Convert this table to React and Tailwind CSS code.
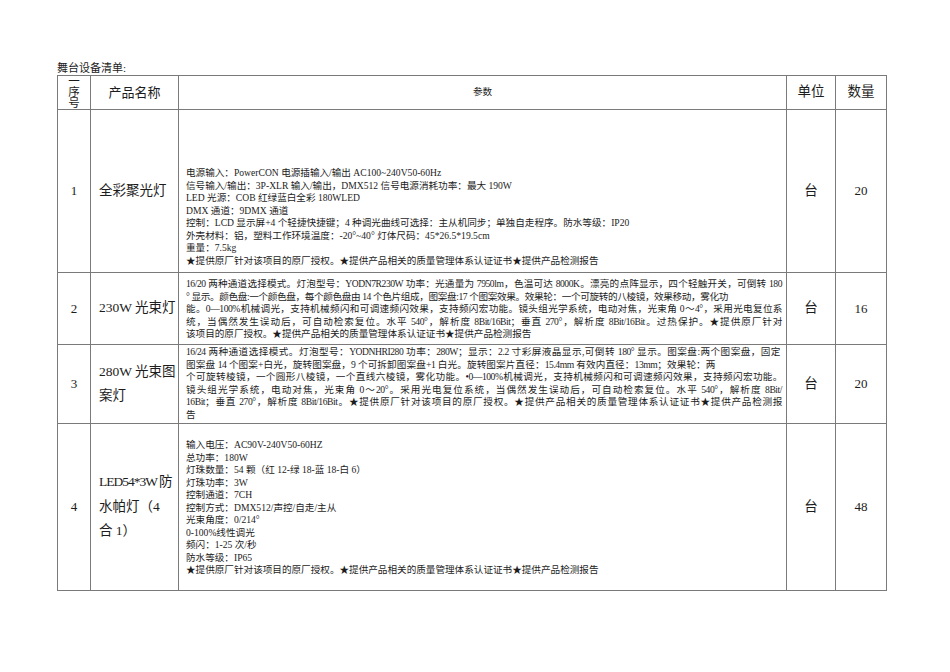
import React from 'react';

const FONT = { fontFamily: '"Liberation Serif", "Noto Sans CJK SC", serif' };

const rows = [
    {
        no: '1',
        name: ['全彩聚光灯'],
        h: 163,
        pt: 57,
        lines: [
            { t: '电源输入：PowerCON 电源插输入/输出 AC100~240V50-60Hz' },
            { t: '信号输入/输出：3P-XLR 输入/输出，DMX512 信号电源消耗功率：最大 190W' },
            { t: 'LED 光源：COB 红绿蓝白全彩 180WLED' },
            { t: 'DMX 通道：9DMX 通道' },
            { t: '控制：LCD 显示屏+4 个轻捷快捷键；4 种调光曲线可选择：主从机同步；单独自走程序。防水等级：IP20' },
            { t: '外壳材料：铝，塑料工作环境温度：-20°~40° 灯体尺码：45*26.5*19.5cm' },
            { t: '重量：7.5kg' },
            { t: '★提供原厂针对该项目的原厂授权。★提供产品相关的质量管理体系认证证书★提供产品检测报告' }
        ],
        unit: '台',
        qty: '20'
    },
    {
        no: '2',
        name: ['230W 光束灯'],
        h: 72,
        pt: 5,
        lines: [
            { t: '16/20 两种通道选择模式。灯泡型号：YODN7R230W 功率：光通量为 7950lm，色温可达 8000K。漂亮的点阵显示，四个轻触开关，可倒转 180', w: 596 },
            { t: '° 显示。颜色盘:一个颜色盘，每个颜色盘由 14 个色片组成，图案盘:17 个图案效果。效果轮：一个可旋转的八棱镜，效果移动，雾化功', w: 542 },
            { t: '能。0—100%机械调光，支持机械频闪和可调速频闪效果，支持频闪宏功能。镜头组光学系统，电动对焦，光束角 0～4°，采用光电复位系', w: 596 },
            { t: '统，当偶然发生误动后，可自动检索复位。水平 540°，解析度 8Bit/16Bit；垂直 270°，解析度 8Bit/16Bit。过热保护。★提供原厂针对', w: 596 },
            { t: '该项目的原厂授权。★提供产品相关的质量管理体系认证证书★提供产品检测报告' }
        ],
        unit: '台',
        qty: '16'
    },
    {
        no: '3',
        name: ['280W 光束图', '案灯'],
        h: 79,
        pt: 1,
        lines: [
            { t: '16/24 两种通道选择模式。灯泡型号：YODNHRI280 功率：280W；显示：2.2 寸彩屏液晶显示,可倒转 180° 显示。图案盘:两个图案盘，固定', w: 594 },
            { t: '图案盘 14 个图案+白光，旋转图案盘，9 个可拆卸图案盘+1 白光。旋转图案片直径：15.4mm 有效内直径：13mm；效果轮：两', w: 529 },
            { t: '个可旋转棱镜，一个圆形八棱镜，一个直线六棱镜，雾化功能。•0—100%机械调光，支持机械频闪和可调速频闪效果，支持频闪宏功能。', w: 596 },
            { t: '镜头组光学系统，电动对焦，光束角 0～20°。采用光电复位系统，当偶然发生误动后，可自动检索复位。水平 540°，解析度 8Bit/', w: 596 },
            { t: '16Bit；垂直 270°，解析度 8Bit/16Bit。★提供原厂针对该项目的原厂授权。★提供产品相关的质量管理体系认证证书★提供产品检测报', w: 596 },
            { t: '告' }
        ],
        unit: '台',
        qty: '20'
    },
    {
        no: '4',
        name: ['LED54*3W 防', '水帕灯（4', '合 1）'],
        tight: true,
        h: 167,
        pt: 15,
        lines: [
            { t: '输入电压：AC90V-240V50-60HZ' },
            { t: '总功率：180W' },
            { t: '灯珠数量：54 颗（红 12-绿 18-蓝 18-白 6）' },
            { t: '灯珠功率：3W' },
            { t: '控制通道：7CH' },
            { t: '控制方式：DMX512/声控/自走/主从' },
            { t: '光束角度：0/214°' },
            { t: '0-100%线性调光' },
            { t: '频闪：1-25 次/秒' },
            { t: '防水等级：IP65' },
            { t: '★提供原厂针对该项目的原厂授权。★提供产品相关的质量管理体系认证证书★提供产品检测报告' }
        ],
        unit: '台',
        qty: '48'
    }
];

function ParamLine({ line }) {
    if (line.w) {
        // full lines: squeezed a little, then stretched back out by justify
        return (
            <div
                className="h-[12.5px] text-justify [text-align-last:justify] tracking-[-0.45px]"
                style={{ width: line.w }}
            >
                {line.t}
            </div>
        );
    }
    return <div className="whitespace-nowrap">{line.t}</div>;
}

export default function App() {
    const cell = "border border-[#7a7a7a]";
    return (
        <div className="w-[950px] h-[672px] bg-white pt-[61px] pl-[57px] text-[#1c1c1c]" style={FONT}>
            <div className="text-[11px] leading-[14px]">舞台设备清单:</div>
            <table className="border-collapse table-fixed w-[829px]">
                <colgroup>
                    <col className="w-[33px]" />
                    <col className="w-[88px]" />
                    <col className="w-[608px]" />
                    <col className="w-[49px]" />
                    <col className="w-[51px]" />
                </colgroup>
                <thead>
                    <tr className="h-[34px]">
                        <th className={`${cell} p-0 font-normal align-top`}>
                            <div className="h-[33px] flex flex-col items-center text-[11.5px] leading-[11px]">
                                <span>一</span>
                                <span>序</span>
                                <span>号</span>
                            </div>
                        </th>
                        <th className={`${cell} p-0 font-normal text-[13px] text-center`}>产品名称</th>
                        <th className={`${cell} p-0 font-normal text-[9.6px] text-center`}>参数</th>
                        <th className={`${cell} p-0 font-normal text-[13.5px] text-center`}>单位</th>
                        <th className={`${cell} p-0 font-normal text-[13.5px] text-center`}>数量</th>
                    </tr>
                </thead>
                <tbody>
                    {rows.map((r) => (
                        <tr key={r.no} style={{ height: r.h }}>
                            <td className={`${cell} p-0 text-center align-middle text-[13px]`}>{r.no}</td>
                            <td className={`${cell} pl-[8px] pr-0 align-middle text-[13.5px] leading-[24.5px]`}>
                                {r.name.map((n, i) => (
                                    <div key={i} className={r.tight && i === 0 ? "whitespace-nowrap tracking-[-1px]" : "whitespace-nowrap"}>{n}</div>
                                ))}
                            </td>
                            <td className={`${cell} pl-[7px] pr-[4px] pb-0 align-top text-[9.6px] leading-[12.5px]`} style={{ paddingTop: r.pt }}>
                                {r.lines.map((l, i) => (
                                    <ParamLine key={i} line={l} />
                                ))}
                            </td>
                            <td className={`${cell} p-0 text-center align-middle text-[13.5px]`}>{r.unit}</td>
                            <td className={`${cell} p-0 text-center align-middle text-[13px]`}>{r.qty}</td>
                        </tr>
                    ))}
                </tbody>
            </table>
        </div>
    );
}
